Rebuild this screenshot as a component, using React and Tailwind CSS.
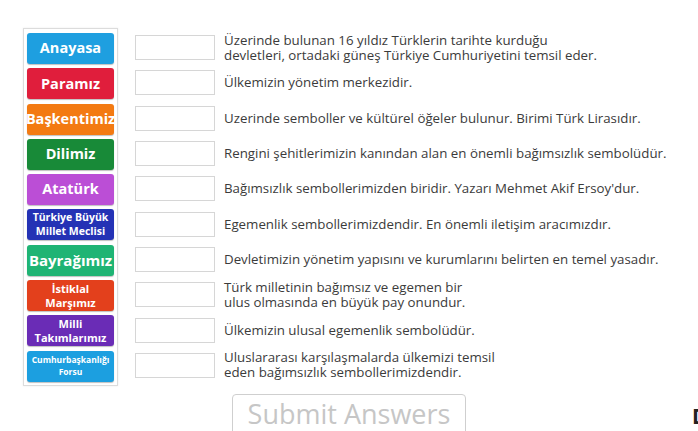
import React from "react";

const items = [
  { label: ["Anayasa"], color: "bg-[#1e9fe0]", size: "text-[14.5px] leading-none" },
  { label: ["Paramız"], color: "bg-[#e01e3c]", size: "text-[14.5px] leading-none" },
  { label: ["Başkentimiz"], color: "bg-[#f37a12]", size: "text-[14.5px] leading-none" },
  { label: ["Dilimiz"], color: "bg-[#188a38]", size: "text-[14.5px] leading-none" },
  { label: ["Atatürk"], color: "bg-[#bb4ed6]", size: "text-[14.5px] leading-none" },
  { label: ["Türkiye Büyük", "Millet Meclisi"], color: "bg-[#2432b5]", size: "text-[10.5px] leading-[13.5px]" },
  { label: ["Bayrağımız"], color: "bg-[#1fb474]", size: "text-[15px] leading-none" },
  { label: ["İstiklal", "Marşımız"], color: "bg-[#e3401c]", size: "text-[11px] leading-[14px]" },
  { label: ["Milli", "Takımlarımız"], color: "bg-[#6a2cb6]", size: "text-[11px] leading-[14px]" },
  { label: ["Cumhurbaşkanlığı", "Forsu"], color: "bg-[#1c9fe0]", size: "text-[8.5px] leading-[12.5px]" },
];

const clues = [
  ["Üzerinde bulunan 16 yıldız Türklerin tarihte kurduğu", "devletleri, ortadaki güneş Türkiye Cumhuriyetini temsil eder."],
  ["Ülkemizin yönetim merkezidir."],
  ["Uzerinde semboller ve kültürel öğeler bulunur. Birimi Türk Lirasıdır."],
  ["Rengini şehitlerimizin kanından alan en önemli bağımsızlık sembolüdür."],
  ["Bağımsızlık sembollerimizden biridir. Yazarı Mehmet Akif Ersoy'dur."],
  ["Egemenlik sembollerimizdendir. En önemli iletişim aracımızdır."],
  ["Devletimizin yönetim yapısını ve kurumlarını belirten en temel yasadır."],
  ["Türk milletinin bağımsız ve egemen bir", "ulus olmasında en büyük pay onundur."],
  ["Ülkemizin ulusal egemenlik sembolüdür."],
  ["Uluslararası karşılaşmalarda ülkemizi temsil", "eden bağımsızlık sembollerimizdendir."],
];

// Joins lines into a single text block with explicit breaks
function Lines({ lines }) {
  return lines.map((l, i) => (
    <React.Fragment key={i}>
      {i > 0 && <br />}
      {l}
    </React.Fragment>
  ));
}

function Tile({ item }) {
  return (
    <div
      className={`${item.color} h-[31px] rounded-[3px] flex items-center justify-center text-white font-bold text-center shadow-[0_1px_1px_rgba(0,0,0,0.25)] ${item.size}`}
    >
      <span>
        <Lines lines={item.label} />
      </span>
    </div>
  );
}

export default function App() {
  return (
    <div className="w-[698px] h-[431px] overflow-hidden bg-white font-['Open_Sans',sans-serif] text-[#3b3b3b]">
      <div className="flex pl-[23px] pt-[28px]">
        <div className="w-[95px] border border-[#dcdcdc] px-[3px] pt-[4px] pb-[3px] flex flex-col gap-[4.3px] shadow-[0_0_2px_rgba(0,0,0,0.08)]">
          {items.map((it, i) => (
            <Tile key={i} item={it} />
          ))}
        </div>
        <div className="ml-[17px] pt-[2px] flex flex-col">
          {clues.map((lines, i) => (
            <div key={i} className="h-[35.3px] flex items-center">
              <div className="w-[80px] h-[25px] border border-[#d6d6d6] bg-white shrink-0" />
              <p className="ml-[9px] text-[13.3px] leading-[15px] whitespace-nowrap">
                <Lines lines={lines} />
              </p>
            </div>
          ))}
        </div>
      </div>
      <div className="grid grid-cols-[232px_234px_1fr] mt-[8px]">
        <div />
        <button className="h-[48px] border border-[#cfcfcf] rounded-[4px] bg-white text-[#c6c6c6] text-[27px] leading-none pb-[8px] font-['Open_Sans',sans-serif]">
          Submit Answers
        </button>
        <div className="pl-[226px] pt-[7px] text-[21px] font-bold text-[#222] whitespace-nowrap">
          Download
        </div>
      </div>
    </div>
  );
}
